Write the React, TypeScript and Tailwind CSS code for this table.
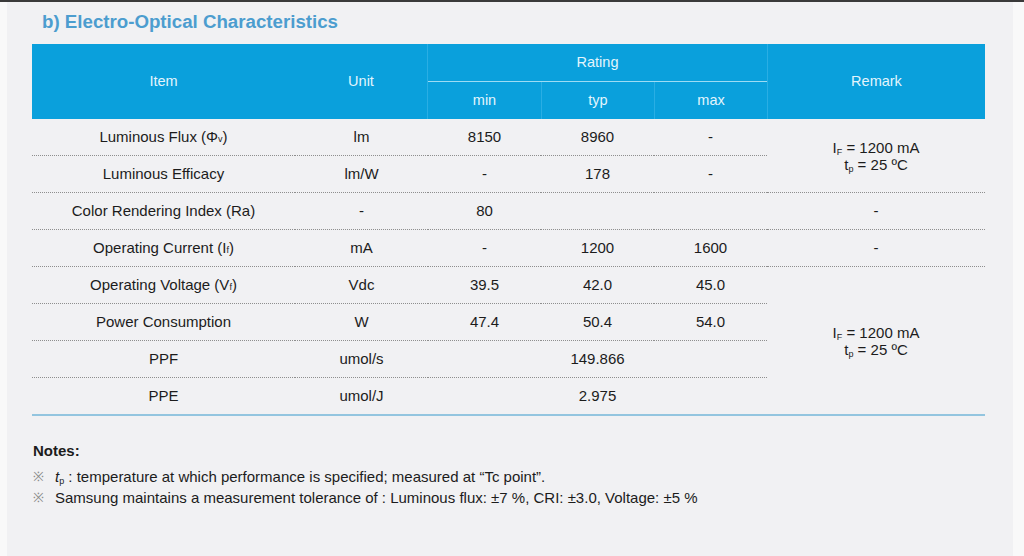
import React from "react";

const font = { fontFamily: '"Liberation Sans", Arial, sans-serif' };

function Cell({
  className = "",
  children,
}: {
  className?: string;
  children?: React.ReactNode;
}) {
  return (
    <div className={`flex items-center justify-center text-[15px] text-[#1c1c1c] ${className}`}>
      {children}
    </div>
  );
}

const dot = "border-b border-dotted border-[#8e8e8e]";

function Remark() {
  return (
    <>
      <span className="leading-[17px]">
        I<sub className="text-[9px]">F</sub> = 1200 mA
      </span>
      <span className="leading-[17px]">
        t<sub className="text-[9px]">p</sub> = 25 ºC
      </span>
    </>
  );
}

export default function App() {
  return (
    <div className="w-[1024px] h-[556px] bg-[#f9f9f9] flex flex-col overflow-hidden" style={font}>
      <div className="h-[2px] bg-[#3a3a3a]" />
      <div className="ml-[7px] w-[1006px] flex-1 bg-[#f1f1f3] pl-[25px] pt-[8px]">
        <h1 className="ml-[10px] h-[24px] leading-[24px] text-[18.7px] font-bold text-[#4c9dcf]">
          b) Electro-Optical Characteristics
        </h1>

        {/* Table header */}
        <div className="mt-[10px] w-[953px] grid grid-cols-[263px_133px_113px_113px_113px_218px] grid-rows-[38px_37px] bg-[#0aa0dc] text-[#e3f5fc] text-[14.5px]">
          <div className="col-start-1 row-start-1 row-span-2 flex items-center justify-center">Item</div>
          <div className="col-start-2 row-start-1 row-span-2 flex items-center justify-center border-r border-[#2aaee4]">Unit</div>
          <div className="col-start-3 col-span-3 row-start-1 flex items-center justify-center border-b border-[#9ddcf4]">Rating</div>
          <div className="col-start-3 row-start-2 flex items-center justify-center">min</div>
          <div className="col-start-4 row-start-2 flex items-center justify-center border-l border-[#2aaee4]">typ</div>
          <div className="col-start-5 row-start-2 flex items-center justify-center border-l border-[#2aaee4]">max</div>
          <div className="col-start-6 row-start-1 row-span-2 flex items-center justify-center border-l border-[#2aaee4]">Remark</div>
        </div>

        {/* Table body */}
        <div className="w-[953px] grid grid-cols-[263px_133px_113px_113px_113px_218px] grid-rows-[37px_37px_37px_37px_37px_37px_37px_36px]">
          {/* Row 1 */}
          <Cell className={`col-start-1 row-start-1 ${dot}`}>
            Luminous Flux (Φ<sub className="text-[9px]">v</sub>)
          </Cell>
          <Cell className={`col-start-2 row-start-1 ${dot}`}>lm</Cell>
          <Cell className={`col-start-3 row-start-1 ${dot}`}>8150</Cell>
          <Cell className={`col-start-4 row-start-1 ${dot}`}>8960</Cell>
          <Cell className={`col-start-5 row-start-1 ${dot}`}>-</Cell>
          <Cell className={`col-start-6 row-start-1 row-span-2 flex-col ${dot}`}>
            <Remark />
          </Cell>

          {/* Row 2 */}
          <Cell className={`col-start-1 row-start-2 ${dot}`}>Luminous Efficacy</Cell>
          <Cell className={`col-start-2 row-start-2 ${dot}`}>lm/W</Cell>
          <Cell className={`col-start-3 row-start-2 ${dot}`}>-</Cell>
          <Cell className={`col-start-4 row-start-2 ${dot}`}>178</Cell>
          <Cell className={`col-start-5 row-start-2 ${dot}`}>-</Cell>

          {/* Row 3 */}
          <Cell className={`col-start-1 row-start-3 ${dot}`}>Color Rendering Index (Ra)</Cell>
          <Cell className={`col-start-2 row-start-3 ${dot}`}>-</Cell>
          <Cell className={`col-start-3 row-start-3 ${dot}`}>80</Cell>
          <Cell className={`col-start-4 row-start-3 ${dot}`}></Cell>
          <Cell className={`col-start-5 row-start-3 ${dot}`}></Cell>
          <Cell className={`col-start-6 row-start-3 ${dot}`}>-</Cell>

          {/* Row 4 */}
          <Cell className={`col-start-1 row-start-4 ${dot}`}>
            Operating Current (I<sub className="text-[9px]">f</sub>)
          </Cell>
          <Cell className={`col-start-2 row-start-4 ${dot}`}>mA</Cell>
          <Cell className={`col-start-3 row-start-4 ${dot}`}>-</Cell>
          <Cell className={`col-start-4 row-start-4 ${dot}`}>1200</Cell>
          <Cell className={`col-start-5 row-start-4 ${dot}`}>1600</Cell>
          <Cell className={`col-start-6 row-start-4 ${dot}`}>-</Cell>

          {/* Row 5 */}
          <Cell className={`col-start-1 row-start-5 ${dot}`}>
            Operating Voltage (V<sub className="text-[9px]">f</sub>)
          </Cell>
          <Cell className={`col-start-2 row-start-5 ${dot}`}>Vdc</Cell>
          <Cell className={`col-start-3 row-start-5 ${dot}`}>39.5</Cell>
          <Cell className={`col-start-4 row-start-5 ${dot}`}>42.0</Cell>
          <Cell className={`col-start-5 row-start-5 ${dot}`}>45.0</Cell>
          <Cell className="col-start-6 row-start-5 row-span-4 flex-col">
            <Remark />
          </Cell>

          {/* Row 6 */}
          <Cell className={`col-start-1 row-start-6 ${dot}`}>Power Consumption</Cell>
          <Cell className={`col-start-2 row-start-6 ${dot}`}>W</Cell>
          <Cell className={`col-start-3 row-start-6 ${dot}`}>47.4</Cell>
          <Cell className={`col-start-4 row-start-6 ${dot}`}>50.4</Cell>
          <Cell className={`col-start-5 row-start-6 ${dot}`}>54.0</Cell>

          {/* Row 7 */}
          <Cell className={`col-start-1 row-start-7 ${dot}`}>PPF</Cell>
          <Cell className={`col-start-2 row-start-7 ${dot}`}>umol/s</Cell>
          <Cell className={`col-start-3 col-span-3 row-start-7 ${dot}`}>149.866</Cell>

          {/* Row 8 */}
          <Cell className="col-start-1 row-start-8">PPE</Cell>
          <Cell className="col-start-2 row-start-8">umol/J</Cell>
          <Cell className="col-start-3 col-span-3 row-start-8">2.975</Cell>
        </div>
        <div className="w-[953px] h-[2px] bg-[#93c5df]" />

        {/* Notes */}
        <div className="mt-[25px] ml-[1px] text-[15px] text-[#1c1c1c]">
          <div className="font-bold leading-[20px]">Notes:</div>
          <div className="mt-[6px] flex flex-col gap-[1px]">
            <div className="flex items-center leading-[20px]">
              <span className="w-[22px] text-[13px] text-[#8a8a8a]">※</span>
              <span>
                <i>t</i>
                <sub className="text-[9px]">p</sub> : temperature at which performance is specified; measured at “Tc point”.
              </span>
            </div>
            <div className="flex items-center leading-[20px]">
              <span className="w-[22px] text-[13px] text-[#8a8a8a]">※</span>
              <span>
                Samsung maintains a measurement tolerance of : Luminous flux: ±7 %, CRI: ±3.0, Voltage: ±5 %
              </span>
            </div>
          </div>
        </div>
      </div>
    </div>
  );
}
